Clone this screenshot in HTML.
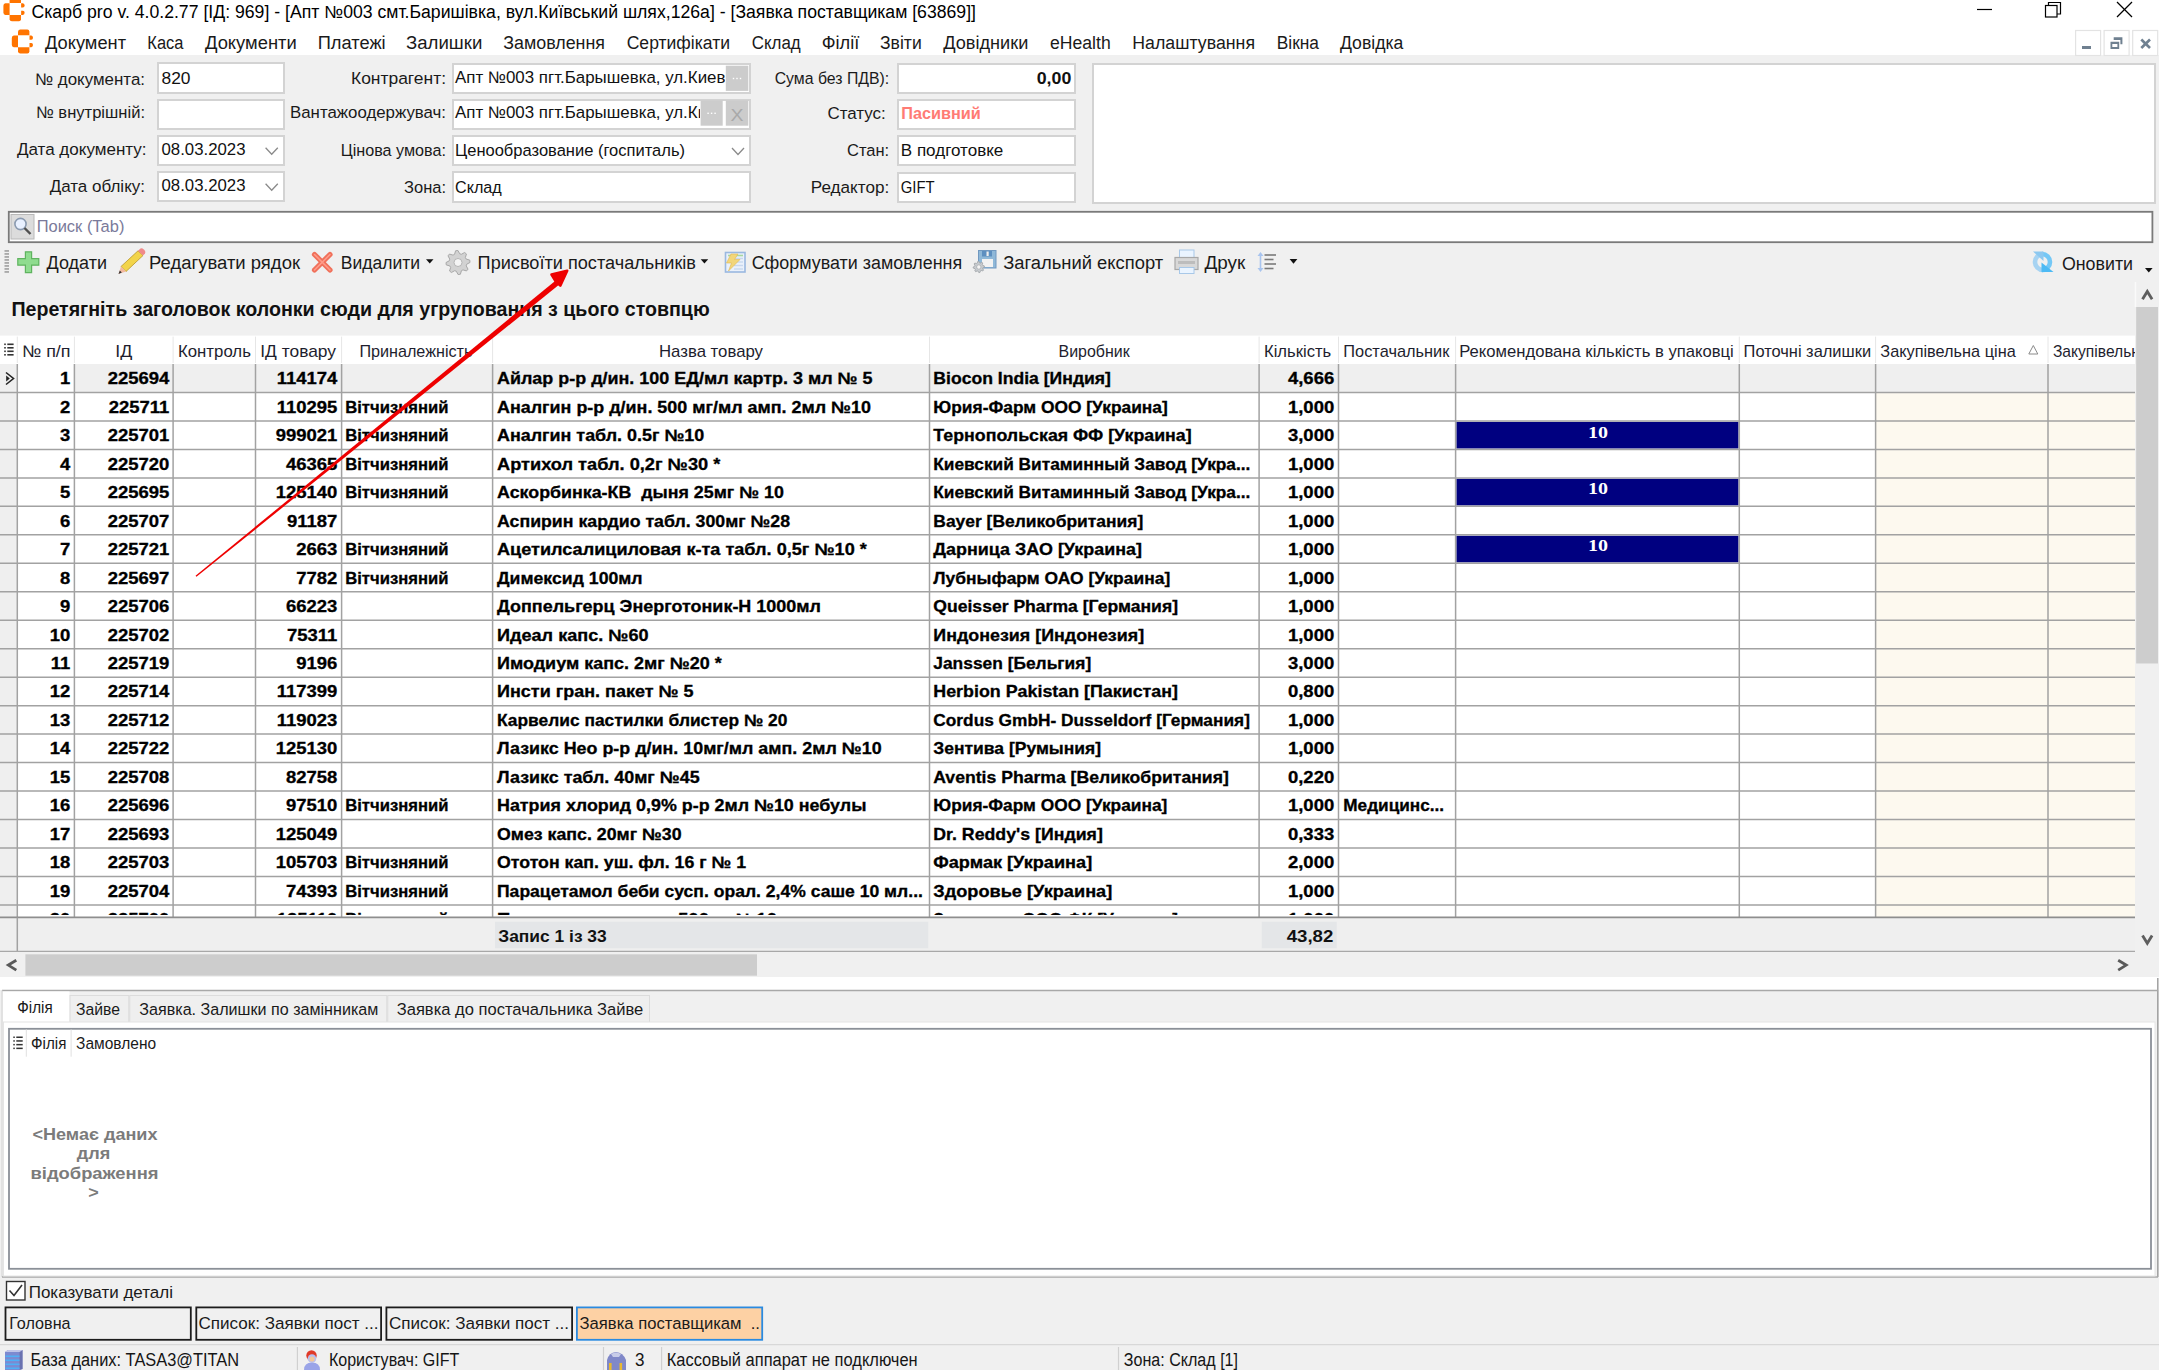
<!DOCTYPE html>
<html><head><meta charset="utf-8"><title>Скарб pro</title>
<style>html,body{margin:0;padding:0;background:#f0f0f0;width:2159px;height:1370px;overflow:hidden}svg{display:block}</style>
</head><body>
<svg width="2159" height="1370" viewBox="0 0 2159 1370">
<rect x="0.00" y="0.00" width="2159.00" height="1370.00" fill="#f0f0f0"/>
<rect x="0.00" y="0.00" width="2159.00" height="55.00" fill="#ffffff"/>
<path d="M18.0,35.3 L18.0,31.4 Q18.4,29.4 20.3,29.4 L27.4,29.4 Q29.2,29.4 29.400000000000002,31.4 L29.400000000000002,35.3 Z" fill="#ff7400"/>
<path d="M18.0,35.5 L13.8,35.5 Q11.8,35.9 11.8,38.0 L11.8,44.8 Q11.8,47.0 13.8,47.2 L18.0,47.2 Z" fill="#ff7400"/>
<path d="M18.0,47.3 L29.400000000000002,47.3 L29.400000000000002,51.599999999999994 Q29.2,53.599999999999994 27.4,53.599999999999994 L20.3,53.599999999999994 Q18.200000000000003,53.599999999999994 18.0,51.599999999999994 Z" fill="#ff7400"/>
<path d="M29.5,35.5 L31.3,35.5 Q33.0,35.9 33.0,37.7 Q33.0,39.599999999999994 31.3,39.7 L29.5,39.7 Z" fill="#ff7400"/>
<path d="M29.5,43.0 L31.3,43.0 Q33.0,43.2 33.0,45.0 Q33.0,47.0 31.3,47.2 L29.5,47.2 Z" fill="#ff7400"/>
<path d="M9.6,3.0000000000000004 L9.6,-0.8999999999999999 Q10.0,-2.9 11.9,-2.9 L19.0,-2.9 Q20.799999999999997,-2.9 21.0,-0.8999999999999999 L21.0,3.0000000000000004 Z" fill="#ff7400"/>
<path d="M9.6,3.1999999999999997 L5.4,3.1999999999999997 Q3.4,3.6 3.4,5.699999999999999 L3.4,12.5 Q3.4,14.700000000000001 5.4,14.9 L9.6,14.9 Z" fill="#ff7400"/>
<path d="M9.6,14.999999999999998 L21.0,14.999999999999998 L21.0,19.3 Q20.799999999999997,21.3 19.0,21.3 L11.9,21.3 Q9.8,21.3 9.6,19.3 Z" fill="#ff7400"/>
<path d="M21.099999999999998,3.1999999999999997 L22.9,3.1999999999999997 Q24.599999999999998,3.6 24.599999999999998,5.4 Q24.599999999999998,7.299999999999999 22.9,7.4 L21.099999999999998,7.4 Z" fill="#ff7400"/>
<path d="M21.099999999999998,10.7 L22.9,10.7 Q24.599999999999998,10.9 24.599999999999998,12.7 Q24.599999999999998,14.700000000000001 22.9,14.9 L21.099999999999998,14.9 Z" fill="#ff7400"/>
<text x="31.50" y="18.30" font-family="Liberation Sans" font-size="17.6" fill="#000" text-anchor="start" xml:space="preserve" textLength="944.50" lengthAdjust="spacingAndGlyphs">Скарб pro v. 4.0.2.77 [ІД: 969] - [Апт №003 смт.Баришівка, вул.Київський шлях,126а] - [Заявка поставщикам [63869]]</text>
<line x1="1977.00" y1="9.50" x2="1992.00" y2="9.50" stroke="#000" stroke-width="1.2"/>
<rect x="2045.50" y="5.50" width="11.50" height="11.50" fill="none" stroke="#000" stroke-width="1.2"/>
<path d="M2048.5,5.5 L2048.5,2.5 L2060.5,2.5 L2060.5,14 L2057,14" fill="none" stroke="#000" stroke-width="1.2"/>
<line x1="2117.00" y1="2.00" x2="2132.00" y2="17.00" stroke="#000" stroke-width="1.3"/>
<line x1="2132.00" y1="2.00" x2="2117.00" y2="17.00" stroke="#000" stroke-width="1.3"/>
<text x="45.00" y="49.30" font-family="Liberation Sans" font-size="17.6" fill="#1a1a1a" text-anchor="start" xml:space="preserve" textLength="81.00" lengthAdjust="spacingAndGlyphs">Документ</text>
<text x="147.30" y="49.30" font-family="Liberation Sans" font-size="17.6" fill="#1a1a1a" text-anchor="start" xml:space="preserve" textLength="36.20" lengthAdjust="spacingAndGlyphs">Каса</text>
<text x="205.00" y="49.30" font-family="Liberation Sans" font-size="17.6" fill="#1a1a1a" text-anchor="start" xml:space="preserve" textLength="91.70" lengthAdjust="spacingAndGlyphs">Документи</text>
<text x="317.70" y="49.30" font-family="Liberation Sans" font-size="17.6" fill="#1a1a1a" text-anchor="start" xml:space="preserve" textLength="68.00" lengthAdjust="spacingAndGlyphs">Платежі</text>
<text x="406.00" y="49.30" font-family="Liberation Sans" font-size="17.6" fill="#1a1a1a" text-anchor="start" xml:space="preserve" textLength="76.30" lengthAdjust="spacingAndGlyphs">Залишки</text>
<text x="503.30" y="49.30" font-family="Liberation Sans" font-size="17.6" fill="#1a1a1a" text-anchor="start" xml:space="preserve" textLength="101.70" lengthAdjust="spacingAndGlyphs">Замовлення</text>
<text x="626.70" y="49.30" font-family="Liberation Sans" font-size="17.6" fill="#1a1a1a" text-anchor="start" xml:space="preserve" textLength="103.30" lengthAdjust="spacingAndGlyphs">Сертифікати</text>
<text x="751.70" y="49.30" font-family="Liberation Sans" font-size="17.6" fill="#1a1a1a" text-anchor="start" xml:space="preserve" textLength="49.00" lengthAdjust="spacingAndGlyphs">Склад</text>
<text x="821.70" y="49.30" font-family="Liberation Sans" font-size="17.6" fill="#1a1a1a" text-anchor="start" xml:space="preserve" textLength="37.60" lengthAdjust="spacingAndGlyphs">Філії</text>
<text x="880.00" y="49.30" font-family="Liberation Sans" font-size="17.6" fill="#1a1a1a" text-anchor="start" xml:space="preserve" textLength="41.70" lengthAdjust="spacingAndGlyphs">Звіти</text>
<text x="943.30" y="49.30" font-family="Liberation Sans" font-size="17.6" fill="#1a1a1a" text-anchor="start" xml:space="preserve" textLength="85.00" lengthAdjust="spacingAndGlyphs">Довідники</text>
<text x="1050.00" y="49.30" font-family="Liberation Sans" font-size="17.6" fill="#1a1a1a" text-anchor="start" xml:space="preserve" textLength="60.70" lengthAdjust="spacingAndGlyphs">eHealth</text>
<text x="1132.30" y="49.30" font-family="Liberation Sans" font-size="17.6" fill="#1a1a1a" text-anchor="start" xml:space="preserve" textLength="122.70" lengthAdjust="spacingAndGlyphs">Налаштування</text>
<text x="1276.70" y="49.30" font-family="Liberation Sans" font-size="17.6" fill="#1a1a1a" text-anchor="start" xml:space="preserve" textLength="42.30" lengthAdjust="spacingAndGlyphs">Вікна</text>
<text x="1340.00" y="49.30" font-family="Liberation Sans" font-size="17.6" fill="#1a1a1a" text-anchor="start" xml:space="preserve" textLength="63.30" lengthAdjust="spacingAndGlyphs">Довідка</text>
<rect x="2075.60" y="30.50" width="25.00" height="25.00" fill="#ffffff" stroke="#e3e3e3" stroke-width="1.2"/>
<rect x="2104.10" y="30.50" width="25.00" height="25.00" fill="#ffffff" stroke="#e3e3e3" stroke-width="1.2"/>
<rect x="2132.70" y="30.50" width="25.00" height="25.00" fill="#ffffff" stroke="#e3e3e3" stroke-width="1.2"/>
<rect x="2082.00" y="46.00" width="9.00" height="3.00" fill="#6f8090"/>
<path d="M2113.7,37.2 h8.7 v7.1 h-2 v-4.3 h-6.7 Z" fill="#6f8090"/>
<path d="M2110.5,41.7 h8.7 v7.2 h-8.7 Z M2112.3,44 h5.1 v3.1 h-5.1 Z" fill="#6f8090" fill-rule="evenodd"/>
<line x1="2141.30" y1="39.50" x2="2150.00" y2="48.00" stroke="#6f8090" stroke-width="2.6"/>
<line x1="2150.00" y1="39.50" x2="2141.30" y2="48.00" stroke="#6f8090" stroke-width="2.6"/>
<rect x="158.00" y="63.00" width="126.00" height="30.00" fill="#ffffff" stroke="#d3d3d3" stroke-width="2"/>
<rect x="158.00" y="100.00" width="126.00" height="29.00" fill="#ffffff" stroke="#d3d3d3" stroke-width="2"/>
<rect x="158.00" y="136.00" width="126.00" height="29.00" fill="#ffffff" stroke="#d3d3d3" stroke-width="2"/>
<rect x="158.00" y="172.00" width="126.00" height="29.00" fill="#ffffff" stroke="#d3d3d3" stroke-width="2"/>
<rect x="453.00" y="64.00" width="297.00" height="29.00" fill="#ffffff" stroke="#d3d3d3" stroke-width="2"/>
<rect x="453.00" y="100.00" width="297.00" height="29.00" fill="#ffffff" stroke="#d3d3d3" stroke-width="2"/>
<rect x="453.00" y="136.00" width="297.00" height="29.00" fill="#ffffff" stroke="#d3d3d3" stroke-width="2"/>
<rect x="453.00" y="172.00" width="297.00" height="30.00" fill="#ffffff" stroke="#d3d3d3" stroke-width="2"/>
<rect x="898.00" y="64.00" width="177.00" height="29.00" fill="#ffffff" stroke="#d3d3d3" stroke-width="2"/>
<rect x="898.00" y="100.00" width="177.00" height="29.00" fill="#ffffff" stroke="#d3d3d3" stroke-width="2"/>
<rect x="898.00" y="136.00" width="177.00" height="29.00" fill="#ffffff" stroke="#d3d3d3" stroke-width="2"/>
<rect x="898.00" y="173.00" width="177.00" height="29.00" fill="#ffffff" stroke="#d3d3d3" stroke-width="2"/>
<rect x="1093.00" y="64.00" width="1062.00" height="139.00" fill="#ffffff" stroke="#d3d3d3" stroke-width="2"/>
<text x="35.00" y="84.90" font-family="Liberation Sans" font-size="16.9" fill="#1a1a1a" text-anchor="start" xml:space="preserve" textLength="110.00" lengthAdjust="spacingAndGlyphs">№ документа:</text>
<text x="36.00" y="117.70" font-family="Liberation Sans" font-size="16.9" fill="#1a1a1a" text-anchor="start" xml:space="preserve" textLength="109.00" lengthAdjust="spacingAndGlyphs">№ внутрішній:</text>
<text x="16.90" y="154.70" font-family="Liberation Sans" font-size="16.9" fill="#1a1a1a" text-anchor="start" xml:space="preserve" textLength="129.70" lengthAdjust="spacingAndGlyphs">Дата документу:</text>
<text x="49.70" y="192.30" font-family="Liberation Sans" font-size="16.9" fill="#1a1a1a" text-anchor="start" xml:space="preserve" textLength="95.30" lengthAdjust="spacingAndGlyphs">Дата обліку:</text>
<text x="351.00" y="83.80" font-family="Liberation Sans" font-size="16.9" fill="#1a1a1a" text-anchor="start" xml:space="preserve" textLength="95.00" lengthAdjust="spacingAndGlyphs">Контрагент:</text>
<text x="290.00" y="118.30" font-family="Liberation Sans" font-size="16.9" fill="#1a1a1a" text-anchor="start" xml:space="preserve" textLength="156.00" lengthAdjust="spacingAndGlyphs">Вантажоодержувач:</text>
<text x="340.70" y="155.80" font-family="Liberation Sans" font-size="16.9" fill="#1a1a1a" text-anchor="start" xml:space="preserve" textLength="105.30" lengthAdjust="spacingAndGlyphs">Цінова умова:</text>
<text x="404.00" y="192.80" font-family="Liberation Sans" font-size="16.9" fill="#1a1a1a" text-anchor="start" xml:space="preserve" textLength="42.00" lengthAdjust="spacingAndGlyphs">Зона:</text>
<text x="774.70" y="84.20" font-family="Liberation Sans" font-size="16.9" fill="#1a1a1a" text-anchor="start" xml:space="preserve" textLength="114.50" lengthAdjust="spacingAndGlyphs">Сума без ПДВ):</text>
<text x="827.50" y="119.20" font-family="Liberation Sans" font-size="16.9" fill="#1a1a1a" text-anchor="start" xml:space="preserve" textLength="58.30" lengthAdjust="spacingAndGlyphs">Статус:</text>
<text x="847.00" y="155.80" font-family="Liberation Sans" font-size="16.9" fill="#1a1a1a" text-anchor="start" xml:space="preserve" textLength="42.20" lengthAdjust="spacingAndGlyphs">Стан:</text>
<text x="810.80" y="192.50" font-family="Liberation Sans" font-size="16.9" fill="#1a1a1a" text-anchor="start" xml:space="preserve" textLength="78.40" lengthAdjust="spacingAndGlyphs">Редактор:</text>
<text x="161.50" y="83.60" font-family="Liberation Sans" font-size="16.9" fill="#111" text-anchor="start" xml:space="preserve" textLength="29.00" lengthAdjust="spacingAndGlyphs">820</text>
<text x="161.50" y="154.90" font-family="Liberation Sans" font-size="16.9" fill="#111" text-anchor="start" xml:space="preserve" textLength="84.00" lengthAdjust="spacingAndGlyphs">08.03.2023</text>
<text x="161.50" y="191.00" font-family="Liberation Sans" font-size="16.9" fill="#111" text-anchor="start" xml:space="preserve" textLength="84.00" lengthAdjust="spacingAndGlyphs">08.03.2023</text>
<path d="M265.6,147.8 L271.70000000000005,154.3 L277.8,147.8" fill="none" stroke="#8a8a8a" stroke-width="1.3"/>
<path d="M265.6,183.8 L271.70000000000005,190.3 L277.8,183.8" fill="none" stroke="#8a8a8a" stroke-width="1.3"/>
<path d="M732,148 L738.0,154.5 L744,148" fill="none" stroke="#8a8a8a" stroke-width="1.3"/>
<clipPath id="c1"><rect x="454" y="64" width="271" height="28"/></clipPath>
<clipPath id="c2"><rect x="454" y="100" width="246" height="28"/></clipPath>
<g clip-path="url(#c1)">
<text x="455.00" y="83.30" font-family="Liberation Sans" font-size="16.9" fill="#111" text-anchor="start" xml:space="preserve">Апт №003 пгт.Барышевка, ул.Киевский шлях</text>
</g>
<g clip-path="url(#c2)">
<text x="455.00" y="118.30" font-family="Liberation Sans" font-size="16.9" fill="#111" text-anchor="start" xml:space="preserve">Апт №003 пгт.Барышевка, ул.Киевский шлях</text>
</g>
<rect x="725.80" y="65.70" width="22.50" height="25.20" fill="#cccccc"/>
<rect x="700.60" y="100.50" width="22.10" height="25.20" fill="#cccccc"/>
<rect x="725.80" y="100.50" width="22.50" height="25.20" fill="#cccccc"/>
<rect x="732.80" y="77.80" width="1.40" height="1.40" fill="#ffffff"/>
<rect x="736.30" y="77.80" width="1.40" height="1.40" fill="#ffffff"/>
<rect x="739.80" y="77.80" width="1.40" height="1.40" fill="#ffffff"/>
<rect x="707.40" y="112.60" width="1.40" height="1.40" fill="#ffffff"/>
<rect x="710.90" y="112.60" width="1.40" height="1.40" fill="#ffffff"/>
<rect x="714.40" y="112.60" width="1.40" height="1.40" fill="#ffffff"/>
<text x="730.50" y="121.00" font-family="Liberation Sans" font-size="17" fill="#a9a9a9" text-anchor="start" xml:space="preserve" textLength="13.00" lengthAdjust="spacingAndGlyphs">X</text>
<text x="455.00" y="155.80" font-family="Liberation Sans" font-size="16.9" fill="#111" text-anchor="start" xml:space="preserve" textLength="230.00" lengthAdjust="spacingAndGlyphs">Ценообразование (госпиталь)</text>
<text x="455.00" y="192.80" font-family="Liberation Sans" font-size="16.9" fill="#111" text-anchor="start" xml:space="preserve" textLength="46.70" lengthAdjust="spacingAndGlyphs">Склад</text>
<text x="1036.70" y="84.20" font-family="Liberation Sans" font-size="16.9" font-weight="bold" fill="#111" text-anchor="start" xml:space="preserve" textLength="34.60" lengthAdjust="spacingAndGlyphs">0,00</text>
<text x="901.30" y="119.20" font-family="Liberation Sans" font-size="16.9" font-weight="bold" fill="#ff7b74" text-anchor="start" xml:space="preserve" textLength="79.50" lengthAdjust="spacingAndGlyphs">Пасивний</text>
<text x="900.80" y="155.80" font-family="Liberation Sans" font-size="16.9" fill="#111" text-anchor="start" xml:space="preserve" textLength="102.50" lengthAdjust="spacingAndGlyphs">В подготовке</text>
<text x="900.80" y="192.50" font-family="Liberation Sans" font-size="16.9" fill="#111" text-anchor="start" xml:space="preserve" textLength="33.90" lengthAdjust="spacingAndGlyphs">GIFT</text>
<rect x="8.80" y="211.80" width="2143.60" height="30.40" fill="#ffffff" stroke="#7a7a7a" stroke-width="1.8"/>
<rect x="11.00" y="214.50" width="23.00" height="24.50" fill="#dcdcdc" stroke="#b8b8b8" stroke-width="1"/>
<circle cx="20.5" cy="224" r="5.6" fill="#e8f0ff" stroke="#8a9ab0" stroke-width="1.6"/>
<line x1="24.50" y1="228.00" x2="30.50" y2="234.00" stroke="#505050" stroke-width="2.4"/>
<text x="36.70" y="232.20" font-family="Liberation Sans" font-size="16.9" fill="#7a7a9a" text-anchor="start" xml:space="preserve" textLength="87.70" lengthAdjust="spacingAndGlyphs">Поиск (Tab)</text>
<rect x="4.50" y="250.30" width="4.50" height="1.30" fill="#8c8c8c"/>
<rect x="4.50" y="253.30" width="4.50" height="1.30" fill="#8c8c8c"/>
<rect x="4.50" y="256.30" width="4.50" height="1.30" fill="#8c8c8c"/>
<rect x="4.50" y="259.30" width="4.50" height="1.30" fill="#8c8c8c"/>
<rect x="4.50" y="262.30" width="4.50" height="1.30" fill="#8c8c8c"/>
<rect x="4.50" y="265.30" width="4.50" height="1.30" fill="#8c8c8c"/>
<rect x="4.50" y="268.30" width="4.50" height="1.30" fill="#8c8c8c"/>
<rect x="4.50" y="271.30" width="4.50" height="1.30" fill="#8c8c8c"/>
<path d="M25.4,251.8 h6.2 v6.8 h7.2 v6.6 h-7.2 v7.5 h-6.2 v-7.5 h-7.6 v-6.6 h7.6 Z" fill="#8fdc8f" stroke="#5fb35f" stroke-width="1.2"/>
<text x="46.60" y="269.30" font-family="Liberation Sans" font-size="17.6" fill="#1a1a1a" text-anchor="start" xml:space="preserve" textLength="60.40" lengthAdjust="spacingAndGlyphs">Додати</text>
<path d="M121,266.5 L138,250.8 L143,255.5 L126,271.5 Z" fill="#f2d44a" stroke="#b8962a" stroke-width="0.8"/>
<path d="M138,250.8 L140.5,248.6 Q142,247.8 143.5,249.2 L145,250.8 Q145.8,252.2 145,253.5 L143,255.5 Z" fill="#f08a8a"/>
<path d="M121,266.5 L126,271.5 L118.5,274 Z" fill="#f2b9a0"/>
<path d="M119.8,270.5 L121.8,272.6 L118.5,274 Z" fill="#333"/>
<text x="149.00" y="269.30" font-family="Liberation Sans" font-size="17.6" fill="#1a1a1a" text-anchor="start" xml:space="preserve" textLength="151.00" lengthAdjust="spacingAndGlyphs">Редагувати рядок</text>
<line x1="314.50" y1="254.50" x2="330.00" y2="270.00" stroke="#f0705a" stroke-width="5.2" stroke-linecap="round"/>
<line x1="330.00" y1="254.50" x2="314.50" y2="270.00" stroke="#f0705a" stroke-width="5.2" stroke-linecap="round"/>
<line x1="314.50" y1="254.50" x2="330.00" y2="270.00" stroke="#ff9c8a" stroke-width="1.6" stroke-linecap="round"/>
<line x1="330.00" y1="254.50" x2="314.50" y2="270.00" stroke="#ff9c8a" stroke-width="1.6" stroke-linecap="round"/>
<text x="340.70" y="269.30" font-family="Liberation Sans" font-size="17.6" fill="#1a1a1a" text-anchor="start" xml:space="preserve" textLength="79.30" lengthAdjust="spacingAndGlyphs">Видалити</text>
<path d="M426,259.3 h7.5 l-3.75,4.3 Z" fill="#111"/>
<path d="M469.76,260.12 L470.00,262.46 L466.72,264.20 L466.22,265.87 L468.00,269.13 L466.52,270.95 L462.96,269.87 L461.43,270.69 L460.38,274.26 L458.04,274.50 L456.30,271.22 L454.63,270.72 L451.37,272.50 L449.55,271.02 L450.63,267.46 L449.81,265.93 L446.24,264.88 L446.00,262.54 L449.28,260.80 L449.78,259.13 L448.00,255.87 L449.48,254.05 L453.04,255.13 L454.57,254.31 L455.62,250.74 L457.96,250.50 L459.70,253.78 L461.37,254.28 L464.63,252.50 L466.45,253.98 L465.37,257.54 L466.19,259.07 Z" fill="#d2d2d2" stroke="#a8a8a8" stroke-width="1"/>
<circle cx="458" cy="262.5" r="4" fill="#f4f4f4" stroke="#a8a8a8" stroke-width="0.8"/>
<text x="477.60" y="269.30" font-family="Liberation Sans" font-size="17.6" fill="#1a1a1a" text-anchor="start" xml:space="preserve" textLength="218.40" lengthAdjust="spacingAndGlyphs">Присвоїти постачальників</text>
<path d="M700.7,259.3 h7.5 l-3.75,4.3 Z" fill="#111"/>
<rect x="725.50" y="252.50" width="19.50" height="19.50" fill="#eaf1fb" stroke="#9ab8e0" stroke-width="1.6"/>
<line x1="734.00" y1="258.50" x2="743.00" y2="258.50" stroke="#c8d8ee" stroke-width="1.4"/>
<line x1="734.00" y1="262.00" x2="743.00" y2="262.00" stroke="#c8d8ee" stroke-width="1.4"/>
<line x1="734.00" y1="265.50" x2="743.00" y2="265.50" stroke="#c8d8ee" stroke-width="1.4"/>
<line x1="734.00" y1="269.00" x2="743.00" y2="269.00" stroke="#c8d8ee" stroke-width="1.4"/>
<line x1="728.00" y1="255.50" x2="743.00" y2="255.50" stroke="#a8d8a0" stroke-width="1.6"/>
<path d="M731,254 L738,254 L734.5,259.5 L740,259.5 L728.5,271 L731.5,263 L726.5,263 Z" fill="#f2d67a" stroke="#e0b850" stroke-width="0.6"/>
<text x="751.70" y="269.30" font-family="Liberation Sans" font-size="17.6" fill="#1a1a1a" text-anchor="start" xml:space="preserve" textLength="210.50" lengthAdjust="spacingAndGlyphs">Сформувати замовлення</text>
<rect x="978.50" y="250.50" width="17.50" height="17.50" fill="#8fb8d8" stroke="#7098c0" stroke-width="1"/>
<rect x="982.00" y="251.00" width="10.00" height="5.50" fill="#5d8fc0"/>
<rect x="986.50" y="251.50" width="2.20" height="4.50" fill="#eeeeee"/>
<rect x="982.00" y="259.00" width="11.00" height="8.00" fill="#f2f2f2"/>
<path d="M984.29,265.89 L984.40,266.98 L982.87,267.79 L982.63,268.57 L983.47,270.09 L982.77,270.95 L981.11,270.44 L980.40,270.82 L979.91,272.49 L978.82,272.60 L978.01,271.07 L977.23,270.83 L975.71,271.67 L974.85,270.97 L975.36,269.31 L974.98,268.60 L973.31,268.11 L973.20,267.02 L974.73,266.21 L974.97,265.43 L974.13,263.91 L974.83,263.05 L976.49,263.56 L977.20,263.18 L977.69,261.51 L978.78,261.40 L979.59,262.93 L980.37,263.17 L981.89,262.33 L982.75,263.03 L982.24,264.69 L982.62,265.40 Z" fill="#c8ccd0" stroke="#a8acb0" stroke-width="1"/>
<circle cx="978.8" cy="267" r="2.2" fill="#f4f4f4" stroke="#a8acb0" stroke-width="0.8"/>
<text x="1003.20" y="269.30" font-family="Liberation Sans" font-size="17.6" fill="#1a1a1a" text-anchor="start" xml:space="preserve" textLength="160.00" lengthAdjust="spacingAndGlyphs">Загальний експорт</text>
<rect x="1179.50" y="250.00" width="14.50" height="9.00" fill="#eaf4ff" stroke="#a8c8e8" stroke-width="1"/>
<rect x="1175.00" y="257.50" width="23.00" height="12.00" fill="#d8d8d8" stroke="#a8a8a8" stroke-width="1.2"/>
<rect x="1178.00" y="261.00" width="17.00" height="3.00" fill="#bdbdbd"/>
<rect x="1179.50" y="267.50" width="14.50" height="6.00" fill="#eaf4ff" stroke="#a8c8e8" stroke-width="1"/>
<text x="1204.40" y="269.30" font-family="Liberation Sans" font-size="17.6" fill="#1a1a1a" text-anchor="start" xml:space="preserve" textLength="40.80" lengthAdjust="spacingAndGlyphs">Друк</text>
<line x1="1260.50" y1="254.00" x2="1260.50" y2="270.00" stroke="#a8c4ee" stroke-width="1.6"/>
<path d="M1257.5,256 L1260.5,252 L1263.5,256 Z" fill="#a8c4ee"/>
<path d="M1257.5,268 L1260.5,272 L1263.5,268 Z" fill="#a8c4ee"/>
<line x1="1264.50" y1="255.00" x2="1276.00" y2="255.00" stroke="#7a7a7a" stroke-width="1.6"/>
<line x1="1264.50" y1="259.50" x2="1273.50" y2="259.50" stroke="#7a7a7a" stroke-width="1.6"/>
<line x1="1264.50" y1="264.00" x2="1276.00" y2="264.00" stroke="#7a7a7a" stroke-width="1.6"/>
<line x1="1264.50" y1="268.50" x2="1273.50" y2="268.50" stroke="#7a7a7a" stroke-width="1.6"/>
<path d="M1289.6,259 h7.8 l-3.9,4.8 Z" fill="#111"/>
<path d="M2043,254 A8,8 0 0 0 2043,270" fill="none" stroke="#a6d3f2" stroke-width="4.6"/>
<path d="M2042,270 A8,8 0 0 0 2042,254" fill="none" stroke="#74c8f6" stroke-width="4.6"/>
<path d="M2033,251.5 L2043.5,251.5 L2043.5,261 Z" fill="#8cc8f0"/>
<path d="M2053.5,272 L2041.5,272 L2041.5,262.5 Z" fill="#4dbaf4"/>
<text x="2061.90" y="269.50" font-family="Liberation Sans" font-size="17.6" fill="#1a1a1a" text-anchor="start" xml:space="preserve" textLength="71.10" lengthAdjust="spacingAndGlyphs">Оновити</text>
<path d="M2145,268 h7.6 l-3.8,4.6 Z" fill="#111"/>
<text x="11.40" y="316.00" font-family="Liberation Sans" font-size="19.5" font-weight="bold" fill="#111" text-anchor="start" xml:space="preserve" textLength="698.30" lengthAdjust="spacingAndGlyphs">Перетягніть заголовок колонки сюди для угруповання з цього стовпцю</text>
<rect x="0.00" y="335.60" width="2135.00" height="28.40" fill="#ffffff"/>
<rect x="0.00" y="364.00" width="2135.00" height="553.50" fill="#ffffff"/>
<rect x="0.00" y="364.00" width="17.30" height="553.50" fill="#efefef"/>
<rect x="1875.60" y="364.00" width="259.40" height="553.50" fill="#fdf9ef"/>
<rect x="74.40" y="364.00" width="2060.60" height="28.47" fill="#efefef"/>
<rect x="1456.40" y="421.84" width="282.10" height="26.67" fill="#000080"/>
<rect x="1456.40" y="478.78" width="282.10" height="26.67" fill="#000080"/>
<rect x="1456.40" y="535.72" width="282.10" height="26.67" fill="#000080"/>
<line x1="17.30" y1="336.60" x2="17.30" y2="363.00" stroke="#e6e6e6" stroke-width="1"/>
<line x1="74.40" y1="336.60" x2="74.40" y2="363.00" stroke="#e6e6e6" stroke-width="1"/>
<line x1="173.10" y1="336.60" x2="173.10" y2="363.00" stroke="#e6e6e6" stroke-width="1"/>
<line x1="255.50" y1="336.60" x2="255.50" y2="363.00" stroke="#e6e6e6" stroke-width="1"/>
<line x1="341.60" y1="336.60" x2="341.60" y2="363.00" stroke="#e6e6e6" stroke-width="1"/>
<line x1="492.60" y1="336.60" x2="492.60" y2="363.00" stroke="#e6e6e6" stroke-width="1"/>
<line x1="929.50" y1="336.60" x2="929.50" y2="363.00" stroke="#e6e6e6" stroke-width="1"/>
<line x1="1259.10" y1="336.60" x2="1259.10" y2="363.00" stroke="#e6e6e6" stroke-width="1"/>
<line x1="1338.50" y1="336.60" x2="1338.50" y2="363.00" stroke="#e6e6e6" stroke-width="1"/>
<line x1="1455.60" y1="336.60" x2="1455.60" y2="363.00" stroke="#e6e6e6" stroke-width="1"/>
<line x1="1739.30" y1="336.60" x2="1739.30" y2="363.00" stroke="#e6e6e6" stroke-width="1"/>
<line x1="1875.60" y1="336.60" x2="1875.60" y2="363.00" stroke="#e6e6e6" stroke-width="1"/>
<line x1="2048.00" y1="336.60" x2="2048.00" y2="363.00" stroke="#e6e6e6" stroke-width="1"/>
<line x1="0.00" y1="392.47" x2="2135.00" y2="392.47" stroke="#a2a2a2" stroke-width="1.5"/>
<line x1="0.00" y1="420.94" x2="2135.00" y2="420.94" stroke="#a2a2a2" stroke-width="1.5"/>
<line x1="0.00" y1="449.41" x2="2135.00" y2="449.41" stroke="#a2a2a2" stroke-width="1.5"/>
<line x1="0.00" y1="477.88" x2="2135.00" y2="477.88" stroke="#a2a2a2" stroke-width="1.5"/>
<line x1="0.00" y1="506.35" x2="2135.00" y2="506.35" stroke="#a2a2a2" stroke-width="1.5"/>
<line x1="0.00" y1="534.82" x2="2135.00" y2="534.82" stroke="#a2a2a2" stroke-width="1.5"/>
<line x1="0.00" y1="563.29" x2="2135.00" y2="563.29" stroke="#a2a2a2" stroke-width="1.5"/>
<line x1="0.00" y1="591.76" x2="2135.00" y2="591.76" stroke="#a2a2a2" stroke-width="1.5"/>
<line x1="0.00" y1="620.23" x2="2135.00" y2="620.23" stroke="#a2a2a2" stroke-width="1.5"/>
<line x1="0.00" y1="648.70" x2="2135.00" y2="648.70" stroke="#a2a2a2" stroke-width="1.5"/>
<line x1="0.00" y1="677.17" x2="2135.00" y2="677.17" stroke="#a2a2a2" stroke-width="1.5"/>
<line x1="0.00" y1="705.64" x2="2135.00" y2="705.64" stroke="#a2a2a2" stroke-width="1.5"/>
<line x1="0.00" y1="734.11" x2="2135.00" y2="734.11" stroke="#a2a2a2" stroke-width="1.5"/>
<line x1="0.00" y1="762.58" x2="2135.00" y2="762.58" stroke="#a2a2a2" stroke-width="1.5"/>
<line x1="0.00" y1="791.05" x2="2135.00" y2="791.05" stroke="#a2a2a2" stroke-width="1.5"/>
<line x1="0.00" y1="819.52" x2="2135.00" y2="819.52" stroke="#a2a2a2" stroke-width="1.5"/>
<line x1="0.00" y1="847.99" x2="2135.00" y2="847.99" stroke="#a2a2a2" stroke-width="1.5"/>
<line x1="0.00" y1="876.46" x2="2135.00" y2="876.46" stroke="#a2a2a2" stroke-width="1.5"/>
<line x1="0.00" y1="904.93" x2="2135.00" y2="904.93" stroke="#a2a2a2" stroke-width="1.5"/>
<line x1="17.30" y1="364.00" x2="17.30" y2="917.50" stroke="#a2a2a2" stroke-width="1.5"/>
<line x1="74.40" y1="364.00" x2="74.40" y2="917.50" stroke="#a2a2a2" stroke-width="1.5"/>
<line x1="173.10" y1="364.00" x2="173.10" y2="917.50" stroke="#a2a2a2" stroke-width="1.5"/>
<line x1="255.50" y1="364.00" x2="255.50" y2="917.50" stroke="#a2a2a2" stroke-width="1.5"/>
<line x1="341.60" y1="364.00" x2="341.60" y2="917.50" stroke="#a2a2a2" stroke-width="1.5"/>
<line x1="492.60" y1="364.00" x2="492.60" y2="917.50" stroke="#a2a2a2" stroke-width="1.5"/>
<line x1="929.50" y1="364.00" x2="929.50" y2="917.50" stroke="#a2a2a2" stroke-width="1.5"/>
<line x1="1259.10" y1="364.00" x2="1259.10" y2="917.50" stroke="#a2a2a2" stroke-width="1.5"/>
<line x1="1338.50" y1="364.00" x2="1338.50" y2="917.50" stroke="#a2a2a2" stroke-width="1.5"/>
<line x1="1455.60" y1="364.00" x2="1455.60" y2="917.50" stroke="#a2a2a2" stroke-width="1.5"/>
<line x1="1739.30" y1="364.00" x2="1739.30" y2="917.50" stroke="#a2a2a2" stroke-width="1.5"/>
<line x1="1875.60" y1="364.00" x2="1875.60" y2="917.50" stroke="#a2a2a2" stroke-width="1.5"/>
<line x1="2048.00" y1="364.00" x2="2048.00" y2="917.50" stroke="#a2a2a2" stroke-width="1.5"/>
<clipPath id="gclip"><rect x="0" y="364.0" width="2135" height="551.1"/></clipPath>
<g clip-path="url(#gclip)">
<text x="59.93" y="384.30" font-family="Liberation Sans" font-size="16.2" font-weight="bold" fill="#000" text-anchor="start" xml:space="preserve" textLength="10.27" lengthAdjust="spacingAndGlyphs" stroke="#000" stroke-width="0.3">1</text>
<text x="107.67" y="384.30" font-family="Liberation Sans" font-size="16.2" font-weight="bold" fill="#000" text-anchor="start" xml:space="preserve" textLength="61.63" lengthAdjust="spacingAndGlyphs" stroke="#000" stroke-width="0.3">225694</text>
<text x="276.69" y="384.30" font-family="Liberation Sans" font-size="16.2" font-weight="bold" fill="#000" text-anchor="start" xml:space="preserve" textLength="60.61" lengthAdjust="spacingAndGlyphs" stroke="#000" stroke-width="0.3">114174</text>
<text x="497.00" y="384.30" font-family="Liberation Sans" font-size="16.2" font-weight="bold" fill="#000" text-anchor="start" xml:space="preserve" textLength="375.50" lengthAdjust="spacingAndGlyphs" stroke="#000" stroke-width="0.3">Айлар р-р д/ин. 100 ЕД/мл картр. 3 мл № 5</text>
<text x="933.30" y="384.30" font-family="Liberation Sans" font-size="16.2" font-weight="bold" fill="#000" text-anchor="start" xml:space="preserve" textLength="177.70" lengthAdjust="spacingAndGlyphs" stroke="#000" stroke-width="0.3">Biocon India [Индия]</text>
<text x="1287.98" y="384.30" font-family="Liberation Sans" font-size="16.2" font-weight="bold" fill="#000" text-anchor="start" xml:space="preserve" textLength="46.22" lengthAdjust="spacingAndGlyphs" stroke="#000" stroke-width="0.3">4,666</text>
<text x="59.93" y="412.77" font-family="Liberation Sans" font-size="16.2" font-weight="bold" fill="#000" text-anchor="start" xml:space="preserve" textLength="10.27" lengthAdjust="spacingAndGlyphs" stroke="#000" stroke-width="0.3">2</text>
<text x="108.69" y="412.77" font-family="Liberation Sans" font-size="16.2" font-weight="bold" fill="#000" text-anchor="start" xml:space="preserve" textLength="60.61" lengthAdjust="spacingAndGlyphs" stroke="#000" stroke-width="0.3">225711</text>
<text x="276.69" y="412.77" font-family="Liberation Sans" font-size="16.2" font-weight="bold" fill="#000" text-anchor="start" xml:space="preserve" textLength="60.61" lengthAdjust="spacingAndGlyphs" stroke="#000" stroke-width="0.3">110295</text>
<text x="345.20" y="412.77" font-family="Liberation Sans" font-size="16.2" font-weight="bold" fill="#000" text-anchor="start" xml:space="preserve" textLength="103.30" lengthAdjust="spacingAndGlyphs" stroke="#000" stroke-width="0.3">Вітчизняний</text>
<text x="497.00" y="412.77" font-family="Liberation Sans" font-size="16.2" font-weight="bold" fill="#000" text-anchor="start" xml:space="preserve" textLength="374.00" lengthAdjust="spacingAndGlyphs" stroke="#000" stroke-width="0.3">Аналгин р-р д/ин. 500 мг/мл амп. 2мл №10</text>
<text x="933.30" y="412.77" font-family="Liberation Sans" font-size="16.2" font-weight="bold" fill="#000" text-anchor="start" xml:space="preserve" textLength="234.50" lengthAdjust="spacingAndGlyphs" stroke="#000" stroke-width="0.3">Юрия-Фарм ООО [Украина]</text>
<text x="1287.98" y="412.77" font-family="Liberation Sans" font-size="16.2" font-weight="bold" fill="#000" text-anchor="start" xml:space="preserve" textLength="46.22" lengthAdjust="spacingAndGlyphs" stroke="#000" stroke-width="0.3">1,000</text>
<text x="59.93" y="441.24" font-family="Liberation Sans" font-size="16.2" font-weight="bold" fill="#000" text-anchor="start" xml:space="preserve" textLength="10.27" lengthAdjust="spacingAndGlyphs" stroke="#000" stroke-width="0.3">3</text>
<text x="107.67" y="441.24" font-family="Liberation Sans" font-size="16.2" font-weight="bold" fill="#000" text-anchor="start" xml:space="preserve" textLength="61.63" lengthAdjust="spacingAndGlyphs" stroke="#000" stroke-width="0.3">225701</text>
<text x="275.67" y="441.24" font-family="Liberation Sans" font-size="16.2" font-weight="bold" fill="#000" text-anchor="start" xml:space="preserve" textLength="61.63" lengthAdjust="spacingAndGlyphs" stroke="#000" stroke-width="0.3">999021</text>
<text x="345.20" y="441.24" font-family="Liberation Sans" font-size="16.2" font-weight="bold" fill="#000" text-anchor="start" xml:space="preserve" textLength="103.30" lengthAdjust="spacingAndGlyphs" stroke="#000" stroke-width="0.3">Вітчизняний</text>
<text x="497.00" y="441.24" font-family="Liberation Sans" font-size="16.2" font-weight="bold" fill="#000" text-anchor="start" xml:space="preserve" textLength="207.30" lengthAdjust="spacingAndGlyphs" stroke="#000" stroke-width="0.3">Аналгин табл. 0.5г №10</text>
<text x="933.30" y="441.24" font-family="Liberation Sans" font-size="16.2" font-weight="bold" fill="#000" text-anchor="start" xml:space="preserve" textLength="258.40" lengthAdjust="spacingAndGlyphs" stroke="#000" stroke-width="0.3">Тернопольская ФФ [Украина]</text>
<text x="1287.98" y="441.24" font-family="Liberation Sans" font-size="16.2" font-weight="bold" fill="#000" text-anchor="start" xml:space="preserve" textLength="46.22" lengthAdjust="spacingAndGlyphs" stroke="#000" stroke-width="0.3">3,000</text>
<text x="59.93" y="469.71" font-family="Liberation Sans" font-size="16.2" font-weight="bold" fill="#000" text-anchor="start" xml:space="preserve" textLength="10.27" lengthAdjust="spacingAndGlyphs" stroke="#000" stroke-width="0.3">4</text>
<text x="107.67" y="469.71" font-family="Liberation Sans" font-size="16.2" font-weight="bold" fill="#000" text-anchor="start" xml:space="preserve" textLength="61.63" lengthAdjust="spacingAndGlyphs" stroke="#000" stroke-width="0.3">225720</text>
<text x="285.94" y="469.71" font-family="Liberation Sans" font-size="16.2" font-weight="bold" fill="#000" text-anchor="start" xml:space="preserve" textLength="51.36" lengthAdjust="spacingAndGlyphs" stroke="#000" stroke-width="0.3">46365</text>
<text x="345.20" y="469.71" font-family="Liberation Sans" font-size="16.2" font-weight="bold" fill="#000" text-anchor="start" xml:space="preserve" textLength="103.30" lengthAdjust="spacingAndGlyphs" stroke="#000" stroke-width="0.3">Вітчизняний</text>
<text x="497.00" y="469.71" font-family="Liberation Sans" font-size="16.2" font-weight="bold" fill="#000" text-anchor="start" xml:space="preserve" textLength="223.30" lengthAdjust="spacingAndGlyphs" stroke="#000" stroke-width="0.3">Артихол табл. 0,2г №30 *</text>
<text x="933.30" y="469.71" font-family="Liberation Sans" font-size="16.2" font-weight="bold" fill="#000" text-anchor="start" xml:space="preserve" textLength="317.10" lengthAdjust="spacingAndGlyphs" stroke="#000" stroke-width="0.3">Киевский Витаминный Завод [Укра...</text>
<text x="1287.98" y="469.71" font-family="Liberation Sans" font-size="16.2" font-weight="bold" fill="#000" text-anchor="start" xml:space="preserve" textLength="46.22" lengthAdjust="spacingAndGlyphs" stroke="#000" stroke-width="0.3">1,000</text>
<text x="59.93" y="498.18" font-family="Liberation Sans" font-size="16.2" font-weight="bold" fill="#000" text-anchor="start" xml:space="preserve" textLength="10.27" lengthAdjust="spacingAndGlyphs" stroke="#000" stroke-width="0.3">5</text>
<text x="107.67" y="498.18" font-family="Liberation Sans" font-size="16.2" font-weight="bold" fill="#000" text-anchor="start" xml:space="preserve" textLength="61.63" lengthAdjust="spacingAndGlyphs" stroke="#000" stroke-width="0.3">225695</text>
<text x="275.67" y="498.18" font-family="Liberation Sans" font-size="16.2" font-weight="bold" fill="#000" text-anchor="start" xml:space="preserve" textLength="61.63" lengthAdjust="spacingAndGlyphs" stroke="#000" stroke-width="0.3">125140</text>
<text x="345.20" y="498.18" font-family="Liberation Sans" font-size="16.2" font-weight="bold" fill="#000" text-anchor="start" xml:space="preserve" textLength="103.30" lengthAdjust="spacingAndGlyphs" stroke="#000" stroke-width="0.3">Вітчизняний</text>
<text x="497.00" y="498.18" font-family="Liberation Sans" font-size="16.2" font-weight="bold" fill="#000" text-anchor="start" xml:space="preserve" textLength="286.90" lengthAdjust="spacingAndGlyphs" stroke="#000" stroke-width="0.3">Аскорбинка-КВ  дыня 25мг № 10</text>
<text x="933.30" y="498.18" font-family="Liberation Sans" font-size="16.2" font-weight="bold" fill="#000" text-anchor="start" xml:space="preserve" textLength="317.10" lengthAdjust="spacingAndGlyphs" stroke="#000" stroke-width="0.3">Киевский Витаминный Завод [Укра...</text>
<text x="1287.98" y="498.18" font-family="Liberation Sans" font-size="16.2" font-weight="bold" fill="#000" text-anchor="start" xml:space="preserve" textLength="46.22" lengthAdjust="spacingAndGlyphs" stroke="#000" stroke-width="0.3">1,000</text>
<text x="59.93" y="526.65" font-family="Liberation Sans" font-size="16.2" font-weight="bold" fill="#000" text-anchor="start" xml:space="preserve" textLength="10.27" lengthAdjust="spacingAndGlyphs" stroke="#000" stroke-width="0.3">6</text>
<text x="107.67" y="526.65" font-family="Liberation Sans" font-size="16.2" font-weight="bold" fill="#000" text-anchor="start" xml:space="preserve" textLength="61.63" lengthAdjust="spacingAndGlyphs" stroke="#000" stroke-width="0.3">225707</text>
<text x="286.96" y="526.65" font-family="Liberation Sans" font-size="16.2" font-weight="bold" fill="#000" text-anchor="start" xml:space="preserve" textLength="50.34" lengthAdjust="spacingAndGlyphs" stroke="#000" stroke-width="0.3">91187</text>
<text x="497.00" y="526.65" font-family="Liberation Sans" font-size="16.2" font-weight="bold" fill="#000" text-anchor="start" xml:space="preserve" textLength="293.10" lengthAdjust="spacingAndGlyphs" stroke="#000" stroke-width="0.3">Аспирин кардио табл. 300мг №28</text>
<text x="933.30" y="526.65" font-family="Liberation Sans" font-size="16.2" font-weight="bold" fill="#000" text-anchor="start" xml:space="preserve" textLength="210.00" lengthAdjust="spacingAndGlyphs" stroke="#000" stroke-width="0.3">Bayer [Великобритания]</text>
<text x="1287.98" y="526.65" font-family="Liberation Sans" font-size="16.2" font-weight="bold" fill="#000" text-anchor="start" xml:space="preserve" textLength="46.22" lengthAdjust="spacingAndGlyphs" stroke="#000" stroke-width="0.3">1,000</text>
<text x="59.93" y="555.12" font-family="Liberation Sans" font-size="16.2" font-weight="bold" fill="#000" text-anchor="start" xml:space="preserve" textLength="10.27" lengthAdjust="spacingAndGlyphs" stroke="#000" stroke-width="0.3">7</text>
<text x="107.67" y="555.12" font-family="Liberation Sans" font-size="16.2" font-weight="bold" fill="#000" text-anchor="start" xml:space="preserve" textLength="61.63" lengthAdjust="spacingAndGlyphs" stroke="#000" stroke-width="0.3">225721</text>
<text x="296.21" y="555.12" font-family="Liberation Sans" font-size="16.2" font-weight="bold" fill="#000" text-anchor="start" xml:space="preserve" textLength="41.09" lengthAdjust="spacingAndGlyphs" stroke="#000" stroke-width="0.3">2663</text>
<text x="345.20" y="555.12" font-family="Liberation Sans" font-size="16.2" font-weight="bold" fill="#000" text-anchor="start" xml:space="preserve" textLength="103.30" lengthAdjust="spacingAndGlyphs" stroke="#000" stroke-width="0.3">Вітчизняний</text>
<text x="497.00" y="555.12" font-family="Liberation Sans" font-size="16.2" font-weight="bold" fill="#000" text-anchor="start" xml:space="preserve" textLength="369.80" lengthAdjust="spacingAndGlyphs" stroke="#000" stroke-width="0.3">Ацетилсалициловая к-та табл. 0,5г №10 *</text>
<text x="933.30" y="555.12" font-family="Liberation Sans" font-size="16.2" font-weight="bold" fill="#000" text-anchor="start" xml:space="preserve" textLength="208.70" lengthAdjust="spacingAndGlyphs" stroke="#000" stroke-width="0.3">Дарница ЗАО [Украина]</text>
<text x="1287.98" y="555.12" font-family="Liberation Sans" font-size="16.2" font-weight="bold" fill="#000" text-anchor="start" xml:space="preserve" textLength="46.22" lengthAdjust="spacingAndGlyphs" stroke="#000" stroke-width="0.3">1,000</text>
<text x="59.93" y="583.59" font-family="Liberation Sans" font-size="16.2" font-weight="bold" fill="#000" text-anchor="start" xml:space="preserve" textLength="10.27" lengthAdjust="spacingAndGlyphs" stroke="#000" stroke-width="0.3">8</text>
<text x="107.67" y="583.59" font-family="Liberation Sans" font-size="16.2" font-weight="bold" fill="#000" text-anchor="start" xml:space="preserve" textLength="61.63" lengthAdjust="spacingAndGlyphs" stroke="#000" stroke-width="0.3">225697</text>
<text x="296.21" y="583.59" font-family="Liberation Sans" font-size="16.2" font-weight="bold" fill="#000" text-anchor="start" xml:space="preserve" textLength="41.09" lengthAdjust="spacingAndGlyphs" stroke="#000" stroke-width="0.3">7782</text>
<text x="345.20" y="583.59" font-family="Liberation Sans" font-size="16.2" font-weight="bold" fill="#000" text-anchor="start" xml:space="preserve" textLength="103.30" lengthAdjust="spacingAndGlyphs" stroke="#000" stroke-width="0.3">Вітчизняний</text>
<text x="497.00" y="583.59" font-family="Liberation Sans" font-size="16.2" font-weight="bold" fill="#000" text-anchor="start" xml:space="preserve" textLength="145.60" lengthAdjust="spacingAndGlyphs" stroke="#000" stroke-width="0.3">Димексид 100мл</text>
<text x="933.30" y="583.59" font-family="Liberation Sans" font-size="16.2" font-weight="bold" fill="#000" text-anchor="start" xml:space="preserve" textLength="236.90" lengthAdjust="spacingAndGlyphs" stroke="#000" stroke-width="0.3">Лубныфарм ОАО [Украина]</text>
<text x="1287.98" y="583.59" font-family="Liberation Sans" font-size="16.2" font-weight="bold" fill="#000" text-anchor="start" xml:space="preserve" textLength="46.22" lengthAdjust="spacingAndGlyphs" stroke="#000" stroke-width="0.3">1,000</text>
<text x="59.93" y="612.06" font-family="Liberation Sans" font-size="16.2" font-weight="bold" fill="#000" text-anchor="start" xml:space="preserve" textLength="10.27" lengthAdjust="spacingAndGlyphs" stroke="#000" stroke-width="0.3">9</text>
<text x="107.67" y="612.06" font-family="Liberation Sans" font-size="16.2" font-weight="bold" fill="#000" text-anchor="start" xml:space="preserve" textLength="61.63" lengthAdjust="spacingAndGlyphs" stroke="#000" stroke-width="0.3">225706</text>
<text x="285.94" y="612.06" font-family="Liberation Sans" font-size="16.2" font-weight="bold" fill="#000" text-anchor="start" xml:space="preserve" textLength="51.36" lengthAdjust="spacingAndGlyphs" stroke="#000" stroke-width="0.3">66223</text>
<text x="497.00" y="612.06" font-family="Liberation Sans" font-size="16.2" font-weight="bold" fill="#000" text-anchor="start" xml:space="preserve" textLength="324.00" lengthAdjust="spacingAndGlyphs" stroke="#000" stroke-width="0.3">Доппельгерц Энерготоник-Н 1000мл</text>
<text x="933.30" y="612.06" font-family="Liberation Sans" font-size="16.2" font-weight="bold" fill="#000" text-anchor="start" xml:space="preserve" textLength="244.70" lengthAdjust="spacingAndGlyphs" stroke="#000" stroke-width="0.3">Queisser Pharma [Германия]</text>
<text x="1287.98" y="612.06" font-family="Liberation Sans" font-size="16.2" font-weight="bold" fill="#000" text-anchor="start" xml:space="preserve" textLength="46.22" lengthAdjust="spacingAndGlyphs" stroke="#000" stroke-width="0.3">1,000</text>
<text x="49.66" y="640.53" font-family="Liberation Sans" font-size="16.2" font-weight="bold" fill="#000" text-anchor="start" xml:space="preserve" textLength="20.54" lengthAdjust="spacingAndGlyphs" stroke="#000" stroke-width="0.3">10</text>
<text x="107.67" y="640.53" font-family="Liberation Sans" font-size="16.2" font-weight="bold" fill="#000" text-anchor="start" xml:space="preserve" textLength="61.63" lengthAdjust="spacingAndGlyphs" stroke="#000" stroke-width="0.3">225702</text>
<text x="286.96" y="640.53" font-family="Liberation Sans" font-size="16.2" font-weight="bold" fill="#000" text-anchor="start" xml:space="preserve" textLength="50.34" lengthAdjust="spacingAndGlyphs" stroke="#000" stroke-width="0.3">75311</text>
<text x="497.00" y="640.53" font-family="Liberation Sans" font-size="16.2" font-weight="bold" fill="#000" text-anchor="start" xml:space="preserve" textLength="151.60" lengthAdjust="spacingAndGlyphs" stroke="#000" stroke-width="0.3">Идеал капс. №60</text>
<text x="933.30" y="640.53" font-family="Liberation Sans" font-size="16.2" font-weight="bold" fill="#000" text-anchor="start" xml:space="preserve" textLength="210.80" lengthAdjust="spacingAndGlyphs" stroke="#000" stroke-width="0.3">Индонезия [Индонезия]</text>
<text x="1287.98" y="640.53" font-family="Liberation Sans" font-size="16.2" font-weight="bold" fill="#000" text-anchor="start" xml:space="preserve" textLength="46.22" lengthAdjust="spacingAndGlyphs" stroke="#000" stroke-width="0.3">1,000</text>
<text x="50.68" y="669.00" font-family="Liberation Sans" font-size="16.2" font-weight="bold" fill="#000" text-anchor="start" xml:space="preserve" textLength="19.52" lengthAdjust="spacingAndGlyphs" stroke="#000" stroke-width="0.3">11</text>
<text x="107.67" y="669.00" font-family="Liberation Sans" font-size="16.2" font-weight="bold" fill="#000" text-anchor="start" xml:space="preserve" textLength="61.63" lengthAdjust="spacingAndGlyphs" stroke="#000" stroke-width="0.3">225719</text>
<text x="296.21" y="669.00" font-family="Liberation Sans" font-size="16.2" font-weight="bold" fill="#000" text-anchor="start" xml:space="preserve" textLength="41.09" lengthAdjust="spacingAndGlyphs" stroke="#000" stroke-width="0.3">9196</text>
<text x="497.00" y="669.00" font-family="Liberation Sans" font-size="16.2" font-weight="bold" fill="#000" text-anchor="start" xml:space="preserve" textLength="224.80" lengthAdjust="spacingAndGlyphs" stroke="#000" stroke-width="0.3">Имодиум капс. 2мг №20 *</text>
<text x="933.30" y="669.00" font-family="Liberation Sans" font-size="16.2" font-weight="bold" fill="#000" text-anchor="start" xml:space="preserve" textLength="157.90" lengthAdjust="spacingAndGlyphs" stroke="#000" stroke-width="0.3">Janssen [Бельгия]</text>
<text x="1287.98" y="669.00" font-family="Liberation Sans" font-size="16.2" font-weight="bold" fill="#000" text-anchor="start" xml:space="preserve" textLength="46.22" lengthAdjust="spacingAndGlyphs" stroke="#000" stroke-width="0.3">3,000</text>
<text x="49.66" y="697.47" font-family="Liberation Sans" font-size="16.2" font-weight="bold" fill="#000" text-anchor="start" xml:space="preserve" textLength="20.54" lengthAdjust="spacingAndGlyphs" stroke="#000" stroke-width="0.3">12</text>
<text x="107.67" y="697.47" font-family="Liberation Sans" font-size="16.2" font-weight="bold" fill="#000" text-anchor="start" xml:space="preserve" textLength="61.63" lengthAdjust="spacingAndGlyphs" stroke="#000" stroke-width="0.3">225714</text>
<text x="276.69" y="697.47" font-family="Liberation Sans" font-size="16.2" font-weight="bold" fill="#000" text-anchor="start" xml:space="preserve" textLength="60.61" lengthAdjust="spacingAndGlyphs" stroke="#000" stroke-width="0.3">117399</text>
<text x="497.00" y="697.47" font-family="Liberation Sans" font-size="16.2" font-weight="bold" fill="#000" text-anchor="start" xml:space="preserve" textLength="196.60" lengthAdjust="spacingAndGlyphs" stroke="#000" stroke-width="0.3">Инсти гран. пакет № 5</text>
<text x="933.30" y="697.47" font-family="Liberation Sans" font-size="16.2" font-weight="bold" fill="#000" text-anchor="start" xml:space="preserve" textLength="244.70" lengthAdjust="spacingAndGlyphs" stroke="#000" stroke-width="0.3">Herbion Pakistan [Пакистан]</text>
<text x="1287.98" y="697.47" font-family="Liberation Sans" font-size="16.2" font-weight="bold" fill="#000" text-anchor="start" xml:space="preserve" textLength="46.22" lengthAdjust="spacingAndGlyphs" stroke="#000" stroke-width="0.3">0,800</text>
<text x="49.66" y="725.94" font-family="Liberation Sans" font-size="16.2" font-weight="bold" fill="#000" text-anchor="start" xml:space="preserve" textLength="20.54" lengthAdjust="spacingAndGlyphs" stroke="#000" stroke-width="0.3">13</text>
<text x="107.67" y="725.94" font-family="Liberation Sans" font-size="16.2" font-weight="bold" fill="#000" text-anchor="start" xml:space="preserve" textLength="61.63" lengthAdjust="spacingAndGlyphs" stroke="#000" stroke-width="0.3">225712</text>
<text x="276.69" y="725.94" font-family="Liberation Sans" font-size="16.2" font-weight="bold" fill="#000" text-anchor="start" xml:space="preserve" textLength="60.61" lengthAdjust="spacingAndGlyphs" stroke="#000" stroke-width="0.3">119023</text>
<text x="497.00" y="725.94" font-family="Liberation Sans" font-size="16.2" font-weight="bold" fill="#000" text-anchor="start" xml:space="preserve" textLength="290.40" lengthAdjust="spacingAndGlyphs" stroke="#000" stroke-width="0.3">Карвелис пастилки блистер № 20</text>
<text x="933.30" y="725.94" font-family="Liberation Sans" font-size="16.2" font-weight="bold" fill="#000" text-anchor="start" xml:space="preserve" textLength="316.60" lengthAdjust="spacingAndGlyphs" stroke="#000" stroke-width="0.3">Cordus GmbH- Dusseldorf [Германия]</text>
<text x="1287.98" y="725.94" font-family="Liberation Sans" font-size="16.2" font-weight="bold" fill="#000" text-anchor="start" xml:space="preserve" textLength="46.22" lengthAdjust="spacingAndGlyphs" stroke="#000" stroke-width="0.3">1,000</text>
<text x="49.66" y="754.41" font-family="Liberation Sans" font-size="16.2" font-weight="bold" fill="#000" text-anchor="start" xml:space="preserve" textLength="20.54" lengthAdjust="spacingAndGlyphs" stroke="#000" stroke-width="0.3">14</text>
<text x="107.67" y="754.41" font-family="Liberation Sans" font-size="16.2" font-weight="bold" fill="#000" text-anchor="start" xml:space="preserve" textLength="61.63" lengthAdjust="spacingAndGlyphs" stroke="#000" stroke-width="0.3">225722</text>
<text x="275.67" y="754.41" font-family="Liberation Sans" font-size="16.2" font-weight="bold" fill="#000" text-anchor="start" xml:space="preserve" textLength="61.63" lengthAdjust="spacingAndGlyphs" stroke="#000" stroke-width="0.3">125130</text>
<text x="497.00" y="754.41" font-family="Liberation Sans" font-size="16.2" font-weight="bold" fill="#000" text-anchor="start" xml:space="preserve" textLength="384.60" lengthAdjust="spacingAndGlyphs" stroke="#000" stroke-width="0.3">Лазикс Нео р-р д/ин. 10мг/мл амп. 2мл №10</text>
<text x="933.30" y="754.41" font-family="Liberation Sans" font-size="16.2" font-weight="bold" fill="#000" text-anchor="start" xml:space="preserve" textLength="167.80" lengthAdjust="spacingAndGlyphs" stroke="#000" stroke-width="0.3">Зентива [Румыния]</text>
<text x="1287.98" y="754.41" font-family="Liberation Sans" font-size="16.2" font-weight="bold" fill="#000" text-anchor="start" xml:space="preserve" textLength="46.22" lengthAdjust="spacingAndGlyphs" stroke="#000" stroke-width="0.3">1,000</text>
<text x="49.66" y="782.88" font-family="Liberation Sans" font-size="16.2" font-weight="bold" fill="#000" text-anchor="start" xml:space="preserve" textLength="20.54" lengthAdjust="spacingAndGlyphs" stroke="#000" stroke-width="0.3">15</text>
<text x="107.67" y="782.88" font-family="Liberation Sans" font-size="16.2" font-weight="bold" fill="#000" text-anchor="start" xml:space="preserve" textLength="61.63" lengthAdjust="spacingAndGlyphs" stroke="#000" stroke-width="0.3">225708</text>
<text x="285.94" y="782.88" font-family="Liberation Sans" font-size="16.2" font-weight="bold" fill="#000" text-anchor="start" xml:space="preserve" textLength="51.36" lengthAdjust="spacingAndGlyphs" stroke="#000" stroke-width="0.3">82758</text>
<text x="497.00" y="782.88" font-family="Liberation Sans" font-size="16.2" font-weight="bold" fill="#000" text-anchor="start" xml:space="preserve" textLength="202.60" lengthAdjust="spacingAndGlyphs" stroke="#000" stroke-width="0.3">Лазикс табл. 40мг №45</text>
<text x="933.30" y="782.88" font-family="Liberation Sans" font-size="16.2" font-weight="bold" fill="#000" text-anchor="start" xml:space="preserve" textLength="295.50" lengthAdjust="spacingAndGlyphs" stroke="#000" stroke-width="0.3">Aventis Pharma [Великобритания]</text>
<text x="1287.98" y="782.88" font-family="Liberation Sans" font-size="16.2" font-weight="bold" fill="#000" text-anchor="start" xml:space="preserve" textLength="46.22" lengthAdjust="spacingAndGlyphs" stroke="#000" stroke-width="0.3">0,220</text>
<text x="49.66" y="811.35" font-family="Liberation Sans" font-size="16.2" font-weight="bold" fill="#000" text-anchor="start" xml:space="preserve" textLength="20.54" lengthAdjust="spacingAndGlyphs" stroke="#000" stroke-width="0.3">16</text>
<text x="107.67" y="811.35" font-family="Liberation Sans" font-size="16.2" font-weight="bold" fill="#000" text-anchor="start" xml:space="preserve" textLength="61.63" lengthAdjust="spacingAndGlyphs" stroke="#000" stroke-width="0.3">225696</text>
<text x="285.94" y="811.35" font-family="Liberation Sans" font-size="16.2" font-weight="bold" fill="#000" text-anchor="start" xml:space="preserve" textLength="51.36" lengthAdjust="spacingAndGlyphs" stroke="#000" stroke-width="0.3">97510</text>
<text x="345.20" y="811.35" font-family="Liberation Sans" font-size="16.2" font-weight="bold" fill="#000" text-anchor="start" xml:space="preserve" textLength="103.30" lengthAdjust="spacingAndGlyphs" stroke="#000" stroke-width="0.3">Вітчизняний</text>
<text x="497.00" y="811.35" font-family="Liberation Sans" font-size="16.2" font-weight="bold" fill="#000" text-anchor="start" xml:space="preserve" textLength="369.40" lengthAdjust="spacingAndGlyphs" stroke="#000" stroke-width="0.3">Натрия хлорид 0,9% р-р 2мл №10 небулы</text>
<text x="933.30" y="811.35" font-family="Liberation Sans" font-size="16.2" font-weight="bold" fill="#000" text-anchor="start" xml:space="preserve" textLength="234.10" lengthAdjust="spacingAndGlyphs" stroke="#000" stroke-width="0.3">Юрия-Фарм ООО [Украина]</text>
<text x="1287.98" y="811.35" font-family="Liberation Sans" font-size="16.2" font-weight="bold" fill="#000" text-anchor="start" xml:space="preserve" textLength="46.22" lengthAdjust="spacingAndGlyphs" stroke="#000" stroke-width="0.3">1,000</text>
<text x="1343.30" y="811.35" font-family="Liberation Sans" font-size="16.2" font-weight="bold" fill="#000" text-anchor="start" xml:space="preserve" textLength="100.80" lengthAdjust="spacingAndGlyphs" stroke="#000" stroke-width="0.3">Медицинс...</text>
<text x="49.66" y="839.82" font-family="Liberation Sans" font-size="16.2" font-weight="bold" fill="#000" text-anchor="start" xml:space="preserve" textLength="20.54" lengthAdjust="spacingAndGlyphs" stroke="#000" stroke-width="0.3">17</text>
<text x="107.67" y="839.82" font-family="Liberation Sans" font-size="16.2" font-weight="bold" fill="#000" text-anchor="start" xml:space="preserve" textLength="61.63" lengthAdjust="spacingAndGlyphs" stroke="#000" stroke-width="0.3">225693</text>
<text x="275.67" y="839.82" font-family="Liberation Sans" font-size="16.2" font-weight="bold" fill="#000" text-anchor="start" xml:space="preserve" textLength="61.63" lengthAdjust="spacingAndGlyphs" stroke="#000" stroke-width="0.3">125049</text>
<text x="497.00" y="839.82" font-family="Liberation Sans" font-size="16.2" font-weight="bold" fill="#000" text-anchor="start" xml:space="preserve" textLength="184.60" lengthAdjust="spacingAndGlyphs" stroke="#000" stroke-width="0.3">Омез капс. 20мг №30</text>
<text x="933.30" y="839.82" font-family="Liberation Sans" font-size="16.2" font-weight="bold" fill="#000" text-anchor="start" xml:space="preserve" textLength="169.50" lengthAdjust="spacingAndGlyphs" stroke="#000" stroke-width="0.3">Dr. Reddy&#x27;s [Индия]</text>
<text x="1287.98" y="839.82" font-family="Liberation Sans" font-size="16.2" font-weight="bold" fill="#000" text-anchor="start" xml:space="preserve" textLength="46.22" lengthAdjust="spacingAndGlyphs" stroke="#000" stroke-width="0.3">0,333</text>
<text x="49.66" y="868.29" font-family="Liberation Sans" font-size="16.2" font-weight="bold" fill="#000" text-anchor="start" xml:space="preserve" textLength="20.54" lengthAdjust="spacingAndGlyphs" stroke="#000" stroke-width="0.3">18</text>
<text x="107.67" y="868.29" font-family="Liberation Sans" font-size="16.2" font-weight="bold" fill="#000" text-anchor="start" xml:space="preserve" textLength="61.63" lengthAdjust="spacingAndGlyphs" stroke="#000" stroke-width="0.3">225703</text>
<text x="275.67" y="868.29" font-family="Liberation Sans" font-size="16.2" font-weight="bold" fill="#000" text-anchor="start" xml:space="preserve" textLength="61.63" lengthAdjust="spacingAndGlyphs" stroke="#000" stroke-width="0.3">105703</text>
<text x="345.20" y="868.29" font-family="Liberation Sans" font-size="16.2" font-weight="bold" fill="#000" text-anchor="start" xml:space="preserve" textLength="103.30" lengthAdjust="spacingAndGlyphs" stroke="#000" stroke-width="0.3">Вітчизняний</text>
<text x="497.00" y="868.29" font-family="Liberation Sans" font-size="16.2" font-weight="bold" fill="#000" text-anchor="start" xml:space="preserve" textLength="249.10" lengthAdjust="spacingAndGlyphs" stroke="#000" stroke-width="0.3">Ототон кап. уш. фл. 16 г № 1</text>
<text x="933.30" y="868.29" font-family="Liberation Sans" font-size="16.2" font-weight="bold" fill="#000" text-anchor="start" xml:space="preserve" textLength="158.90" lengthAdjust="spacingAndGlyphs" stroke="#000" stroke-width="0.3">Фармак [Украина]</text>
<text x="1287.98" y="868.29" font-family="Liberation Sans" font-size="16.2" font-weight="bold" fill="#000" text-anchor="start" xml:space="preserve" textLength="46.22" lengthAdjust="spacingAndGlyphs" stroke="#000" stroke-width="0.3">2,000</text>
<text x="49.66" y="896.76" font-family="Liberation Sans" font-size="16.2" font-weight="bold" fill="#000" text-anchor="start" xml:space="preserve" textLength="20.54" lengthAdjust="spacingAndGlyphs" stroke="#000" stroke-width="0.3">19</text>
<text x="107.67" y="896.76" font-family="Liberation Sans" font-size="16.2" font-weight="bold" fill="#000" text-anchor="start" xml:space="preserve" textLength="61.63" lengthAdjust="spacingAndGlyphs" stroke="#000" stroke-width="0.3">225704</text>
<text x="285.94" y="896.76" font-family="Liberation Sans" font-size="16.2" font-weight="bold" fill="#000" text-anchor="start" xml:space="preserve" textLength="51.36" lengthAdjust="spacingAndGlyphs" stroke="#000" stroke-width="0.3">74393</text>
<text x="345.20" y="896.76" font-family="Liberation Sans" font-size="16.2" font-weight="bold" fill="#000" text-anchor="start" xml:space="preserve" textLength="103.30" lengthAdjust="spacingAndGlyphs" stroke="#000" stroke-width="0.3">Вітчизняний</text>
<text x="497.00" y="896.76" font-family="Liberation Sans" font-size="16.2" font-weight="bold" fill="#000" text-anchor="start" xml:space="preserve" textLength="425.90" lengthAdjust="spacingAndGlyphs" stroke="#000" stroke-width="0.3">Парацетамол беби сусп. орал. 2,4% саше 10 мл...</text>
<text x="933.30" y="896.76" font-family="Liberation Sans" font-size="16.2" font-weight="bold" fill="#000" text-anchor="start" xml:space="preserve" textLength="179.00" lengthAdjust="spacingAndGlyphs" stroke="#000" stroke-width="0.3">Здоровье [Украина]</text>
<text x="1287.98" y="896.76" font-family="Liberation Sans" font-size="16.2" font-weight="bold" fill="#000" text-anchor="start" xml:space="preserve" textLength="46.22" lengthAdjust="spacingAndGlyphs" stroke="#000" stroke-width="0.3">1,000</text>
<text x="49.66" y="925.23" font-family="Liberation Sans" font-size="16.2" font-weight="bold" fill="#000" text-anchor="start" xml:space="preserve" textLength="20.54" lengthAdjust="spacingAndGlyphs" stroke="#000" stroke-width="0.3">20</text>
<text x="107.67" y="925.23" font-family="Liberation Sans" font-size="16.2" font-weight="bold" fill="#000" text-anchor="start" xml:space="preserve" textLength="61.63" lengthAdjust="spacingAndGlyphs" stroke="#000" stroke-width="0.3">225700</text>
<text x="276.69" y="925.23" font-family="Liberation Sans" font-size="16.2" font-weight="bold" fill="#000" text-anchor="start" xml:space="preserve" textLength="60.61" lengthAdjust="spacingAndGlyphs" stroke="#000" stroke-width="0.3">125110</text>
<text x="345.20" y="925.23" font-family="Liberation Sans" font-size="16.2" font-weight="bold" fill="#000" text-anchor="start" xml:space="preserve" textLength="103.30" lengthAdjust="spacingAndGlyphs" stroke="#000" stroke-width="0.3">Вітчизняний</text>
<text x="497.00" y="925.23" font-family="Liberation Sans" font-size="16.2" font-weight="bold" fill="#000" text-anchor="start" xml:space="preserve" textLength="280.00" lengthAdjust="spacingAndGlyphs" stroke="#000" stroke-width="0.3">Парацетамол супп. 500мг №10</text>
<text x="933.30" y="925.23" font-family="Liberation Sans" font-size="16.2" font-weight="bold" fill="#000" text-anchor="start" xml:space="preserve" textLength="244.70" lengthAdjust="spacingAndGlyphs" stroke="#000" stroke-width="0.3">Здоровье ООО ФК [Украина]</text>
<text x="1287.98" y="925.23" font-family="Liberation Sans" font-size="16.2" font-weight="bold" fill="#000" text-anchor="start" xml:space="preserve" textLength="46.22" lengthAdjust="spacingAndGlyphs" stroke="#000" stroke-width="0.3">1,000</text>
</g>
<text x="1588.00" y="437.54" font-family="Liberation Serif" font-size="17.2" font-weight="bold" fill="#ffffff" text-anchor="start" xml:space="preserve" textLength="20.00" lengthAdjust="spacingAndGlyphs">10</text>
<text x="1588.00" y="494.48" font-family="Liberation Serif" font-size="17.2" font-weight="bold" fill="#ffffff" text-anchor="start" xml:space="preserve" textLength="20.00" lengthAdjust="spacingAndGlyphs">10</text>
<text x="1588.00" y="551.42" font-family="Liberation Serif" font-size="17.2" font-weight="bold" fill="#ffffff" text-anchor="start" xml:space="preserve" textLength="20.00" lengthAdjust="spacingAndGlyphs">10</text>
<path d="M6,372.5 L13.5,378.5 L6,384.5" fill="none" stroke="#222" stroke-width="1.6"/>
<path d="M6.2,375.5 L9.8,378.5 L6.2,381.5 Z" fill="#222"/>
<rect x="4.20" y="343.50" width="1.60" height="1.60" fill="#333"/>
<rect x="7.30" y="343.50" width="6.30" height="1.60" fill="#333"/>
<rect x="4.20" y="347.00" width="1.60" height="1.60" fill="#333"/>
<rect x="7.30" y="347.00" width="6.30" height="1.60" fill="#333"/>
<rect x="4.20" y="350.50" width="1.60" height="1.60" fill="#333"/>
<rect x="7.30" y="350.50" width="6.30" height="1.60" fill="#333"/>
<rect x="4.20" y="354.00" width="1.60" height="1.60" fill="#333"/>
<rect x="7.30" y="354.00" width="6.30" height="1.60" fill="#333"/>
<text x="22.00" y="356.60" font-family="Liberation Sans" font-size="16.6" fill="#1e1e2e" text-anchor="start" xml:space="preserve" textLength="48.50" lengthAdjust="spacingAndGlyphs">№ п/п</text>
<text x="115.20" y="356.60" font-family="Liberation Sans" font-size="16.6" fill="#1e1e2e" text-anchor="start" xml:space="preserve" textLength="17.00" lengthAdjust="spacingAndGlyphs">ІД</text>
<text x="178.00" y="356.60" font-family="Liberation Sans" font-size="16.6" fill="#1e1e2e" text-anchor="start" xml:space="preserve" textLength="72.90" lengthAdjust="spacingAndGlyphs">Контроль</text>
<text x="260.30" y="356.60" font-family="Liberation Sans" font-size="16.6" fill="#1e1e2e" text-anchor="start" xml:space="preserve" textLength="75.70" lengthAdjust="spacingAndGlyphs">ІД товару</text>
<text x="359.40" y="356.60" font-family="Liberation Sans" font-size="16.6" fill="#1e1e2e" text-anchor="start" xml:space="preserve" textLength="113.00" lengthAdjust="spacingAndGlyphs">Приналежність</text>
<text x="659.00" y="356.60" font-family="Liberation Sans" font-size="16.6" fill="#1e1e2e" text-anchor="start" xml:space="preserve" textLength="104.00" lengthAdjust="spacingAndGlyphs">Назва товару</text>
<text x="1058.50" y="356.60" font-family="Liberation Sans" font-size="16.6" fill="#1e1e2e" text-anchor="start" xml:space="preserve" textLength="71.20" lengthAdjust="spacingAndGlyphs">Виробник</text>
<text x="1264.00" y="356.60" font-family="Liberation Sans" font-size="16.6" fill="#1e1e2e" text-anchor="start" xml:space="preserve" textLength="67.20" lengthAdjust="spacingAndGlyphs">Кількість</text>
<text x="1343.30" y="356.60" font-family="Liberation Sans" font-size="16.6" fill="#1e1e2e" text-anchor="start" xml:space="preserve" textLength="106.10" lengthAdjust="spacingAndGlyphs">Постачальник</text>
<text x="1459.20" y="356.60" font-family="Liberation Sans" font-size="16.6" fill="#1e1e2e" text-anchor="start" xml:space="preserve" textLength="274.60" lengthAdjust="spacingAndGlyphs">Рекомендована кількість в упаковці</text>
<text x="1743.60" y="356.60" font-family="Liberation Sans" font-size="16.6" fill="#1e1e2e" text-anchor="start" xml:space="preserve" textLength="127.50" lengthAdjust="spacingAndGlyphs">Поточні залишки</text>
<text x="1880.30" y="356.60" font-family="Liberation Sans" font-size="16.6" fill="#1e1e2e" text-anchor="start" xml:space="preserve" textLength="135.40" lengthAdjust="spacingAndGlyphs">Закупівельна ціна</text>
<path d="M2028.8,354 L2033.3,345.5 L2037.8,354 Z" fill="none" stroke="#8a8a8a" stroke-width="1"/>
<clipPath id="hclip"><rect x="2049" y="336" width="86" height="28"/></clipPath>
<g clip-path="url(#hclip)">
<text x="2052.90" y="356.60" font-family="Liberation Sans" font-size="16.6" fill="#1e1e2e" text-anchor="start" xml:space="preserve" textLength="135.00" lengthAdjust="spacingAndGlyphs">Закупівельна сума</text>
</g>
<line x1="0.00" y1="917.50" x2="2135.00" y2="917.50" stroke="#8e8e8e" stroke-width="2"/>
<rect x="0.00" y="918.50" width="2135.00" height="32.80" fill="#efefef"/>
<line x1="17.30" y1="917.50" x2="17.30" y2="951.30" stroke="#a2a2a2" stroke-width="1.5"/>
<line x1="0.00" y1="951.30" x2="2135.00" y2="951.30" stroke="#a8a8a8" stroke-width="1.3"/>
<rect x="495.00" y="921.70" width="433.30" height="26.60" fill="#e4e6e8"/>
<text x="498.30" y="941.70" font-family="Liberation Sans" font-size="16.2" font-weight="bold" fill="#111" text-anchor="start" xml:space="preserve" textLength="108.40" lengthAdjust="spacingAndGlyphs">Запис 1 із 33</text>
<rect x="1261.70" y="921.70" width="75.00" height="26.60" fill="#e4e6e8"/>
<text x="1286.70" y="941.70" font-family="Liberation Sans" font-size="16.2" font-weight="bold" fill="#111" text-anchor="start" xml:space="preserve" textLength="46.60" lengthAdjust="spacingAndGlyphs">43,82</text>
<rect x="2135.00" y="282.00" width="24.00" height="670.00" fill="#f0f0f0"/>
<line x1="2135.40" y1="282.00" x2="2135.40" y2="307.00" stroke="#fafafa" stroke-width="1.5"/>
<rect x="2136.20" y="307.00" width="21.80" height="356.50" fill="#cdcdcd"/>
<path d="M2142.5,299.3 L2147.3,291.5 L2152.1,299.3" fill="none" stroke="#5e5e5e" stroke-width="2.8"/>
<path d="M2142.5,935.5 L2147.3,943.3 L2152.1,935.5" fill="none" stroke="#5e5e5e" stroke-width="2.8"/>
<rect x="0.00" y="953.50" width="2135.00" height="24.00" fill="#f0f0f0"/>
<rect x="25.40" y="954.30" width="731.60" height="21.40" fill="#cdcdcd"/>
<path d="M16.3,960.2 L8.3,965.1 L16.3,970.1" fill="none" stroke="#5a5a5a" stroke-width="2.8"/>
<path d="M2118.2,960.2 L2126.2,965.1 L2118.2,970.1" fill="none" stroke="#5a5a5a" stroke-width="2.8"/>
<rect x="0.00" y="977.00" width="2159.00" height="13.00" fill="#ffffff"/>
<line x1="2157.80" y1="978.00" x2="2157.80" y2="1277.00" stroke="#a0a0a0" stroke-width="1.5"/>
<line x1="2.00" y1="990.50" x2="2158.00" y2="990.50" stroke="#a8a8a8" stroke-width="1.5"/>
<line x1="2.00" y1="990.50" x2="2.00" y2="1277.00" stroke="#d8d8d8" stroke-width="1.2"/>
<line x1="2.00" y1="1277.00" x2="2158.00" y2="1277.00" stroke="#a8a8a8" stroke-width="1.5"/>
<rect x="3.00" y="991.50" width="66.50" height="34.00" fill="#ffffff"/>
<rect x="70.00" y="995.50" width="58.80" height="27.00" fill="#efefef" stroke="#dcdcdc" stroke-width="1"/>
<rect x="129.80" y="995.50" width="257.00" height="27.00" fill="#efefef" stroke="#dcdcdc" stroke-width="1"/>
<rect x="387.80" y="995.50" width="261.70" height="27.00" fill="#efefef" stroke="#dcdcdc" stroke-width="1"/>
<text x="17.30" y="1013.30" font-family="Liberation Sans" font-size="16.9" fill="#1a1a1a" text-anchor="start" xml:space="preserve" textLength="35.40" lengthAdjust="spacingAndGlyphs">Філія</text>
<text x="76.00" y="1014.90" font-family="Liberation Sans" font-size="16.9" fill="#1a1a1a" text-anchor="start" xml:space="preserve" textLength="44.00" lengthAdjust="spacingAndGlyphs">Зайве</text>
<text x="139.30" y="1014.90" font-family="Liberation Sans" font-size="16.9" fill="#1a1a1a" text-anchor="start" xml:space="preserve" textLength="239.00" lengthAdjust="spacingAndGlyphs">Заявка. Залишки по замінникам</text>
<text x="396.70" y="1014.90" font-family="Liberation Sans" font-size="16.9" fill="#1a1a1a" text-anchor="start" xml:space="preserve" textLength="246.60" lengthAdjust="spacingAndGlyphs">Заявка до постачальника Зайве</text>
<rect x="3.00" y="1022.00" width="2152.00" height="254.00" fill="#ffffff"/>
<rect x="3.50" y="1022.00" width="2151.50" height="254.00" fill="none" stroke="#e4e4e4" stroke-width="1"/>
<rect x="9.00" y="1028.80" width="2142.00" height="240.00" fill="#ffffff" stroke="#8b9098" stroke-width="1.8"/>
<line x1="26.30" y1="1029.50" x2="26.30" y2="1056.70" stroke="#e0e0e0" stroke-width="1"/>
<line x1="71.10" y1="1029.50" x2="71.10" y2="1056.70" stroke="#e0e0e0" stroke-width="1"/>
<rect x="13.30" y="1036.50" width="1.50" height="1.50" fill="#333"/>
<rect x="16.30" y="1036.50" width="6.40" height="1.50" fill="#333"/>
<rect x="13.30" y="1040.20" width="1.50" height="1.50" fill="#333"/>
<rect x="16.30" y="1040.20" width="6.40" height="1.50" fill="#333"/>
<rect x="13.30" y="1043.90" width="1.50" height="1.50" fill="#333"/>
<rect x="16.30" y="1043.90" width="6.40" height="1.50" fill="#333"/>
<rect x="13.30" y="1047.60" width="1.50" height="1.50" fill="#333"/>
<rect x="16.30" y="1047.60" width="6.40" height="1.50" fill="#333"/>
<text x="31.10" y="1049.40" font-family="Liberation Sans" font-size="16.9" fill="#1a1a1a" text-anchor="start" xml:space="preserve" textLength="35.30" lengthAdjust="spacingAndGlyphs">Філія</text>
<text x="76.10" y="1049.40" font-family="Liberation Sans" font-size="16.9" fill="#1a1a1a" text-anchor="start" xml:space="preserve" textLength="80.00" lengthAdjust="spacingAndGlyphs">Замовлено</text>
<text x="32.50" y="1139.60" font-family="Liberation Sans" font-size="16.9" font-weight="bold" fill="#7b7b7b" text-anchor="start" xml:space="preserve" textLength="125.00" lengthAdjust="spacingAndGlyphs">&lt;Немає даних</text>
<text x="76.75" y="1159.10" font-family="Liberation Sans" font-size="16.9" font-weight="bold" fill="#7b7b7b" text-anchor="start" xml:space="preserve" textLength="33.50" lengthAdjust="spacingAndGlyphs">для</text>
<text x="30.50" y="1178.50" font-family="Liberation Sans" font-size="16.9" font-weight="bold" fill="#7b7b7b" text-anchor="start" xml:space="preserve" textLength="128.00" lengthAdjust="spacingAndGlyphs">відображення</text>
<text x="88.25" y="1197.50" font-family="Liberation Sans" font-size="16.9" font-weight="bold" fill="#7b7b7b" text-anchor="start" xml:space="preserve" textLength="10.50" lengthAdjust="spacingAndGlyphs">&gt;</text>
<rect x="6.50" y="1281.50" width="18.50" height="18.50" fill="#ffffff" stroke="#333" stroke-width="1.4"/>
<path d="M9.5,1290.5 L14,1295.5 L22,1285" fill="none" stroke="#333" stroke-width="1.6"/>
<text x="28.70" y="1298.30" font-family="Liberation Sans" font-size="16.9" fill="#1a1a1a" text-anchor="start" xml:space="preserve" textLength="144.30" lengthAdjust="spacingAndGlyphs">Показувати деталі</text>
<rect x="5.50" y="1307.40" width="185.30" height="32.40" fill="#f0f0f0" stroke="#1c1c1c" stroke-width="1.8"/>
<rect x="196.30" y="1307.40" width="184.80" height="32.40" fill="#f0f0f0" stroke="#1c1c1c" stroke-width="1.8"/>
<rect x="386.40" y="1307.40" width="185.70" height="32.40" fill="#f0f0f0" stroke="#1c1c1c" stroke-width="1.8"/>
<text x="9.20" y="1329.20" font-family="Liberation Sans" font-size="16.9" fill="#1a1a1a" text-anchor="start" xml:space="preserve" textLength="61.40" lengthAdjust="spacingAndGlyphs">Головна</text>
<text x="198.50" y="1329.20" font-family="Liberation Sans" font-size="16.9" fill="#1a1a1a" text-anchor="start" xml:space="preserve" textLength="180.00" lengthAdjust="spacingAndGlyphs">Список: Заявки пост ...</text>
<text x="389.00" y="1329.20" font-family="Liberation Sans" font-size="16.9" fill="#1a1a1a" text-anchor="start" xml:space="preserve" textLength="180.00" lengthAdjust="spacingAndGlyphs">Список: Заявки пост ...</text>
<rect x="576.90" y="1307.40" width="185.30" height="32.40" fill="#fdd1a4" stroke="#2a8ae0" stroke-width="1.8"/>
<text x="579.50" y="1329.20" font-family="Liberation Sans" font-size="16.9" fill="#1a1a1a" text-anchor="start" xml:space="preserve" textLength="180.50" lengthAdjust="spacingAndGlyphs">Заявка поставщикам  ..</text>
<line x1="0.00" y1="1344.60" x2="2159.00" y2="1344.60" stroke="#d8d8d8" stroke-width="1.2"/>
<line x1="297.40" y1="1347.00" x2="297.40" y2="1370.00" stroke="#d0d0d0" stroke-width="1.2"/>
<line x1="603.50" y1="1347.00" x2="603.50" y2="1370.00" stroke="#d0d0d0" stroke-width="1.2"/>
<line x1="661.60" y1="1347.00" x2="661.60" y2="1370.00" stroke="#d0d0d0" stroke-width="1.2"/>
<line x1="1118.50" y1="1347.00" x2="1118.50" y2="1370.00" stroke="#d0d0d0" stroke-width="1.2"/>
<path d="M5,1352 L8,1350 L22.5,1350 L22.5,1369 L19,1370 L5,1370 Z" fill="#8a90c8"/>
<rect x="5.00" y="1352.00" width="14.50" height="18.00" fill="#7d8ad0"/>
<path d="M19.5,1352 L22.5,1350 L22.5,1369 L19.5,1370 Z" fill="#6a72b0"/>
<path d="M5,1352 L8,1350 L22.5,1350 L19.5,1352 Z" fill="#c0c4e8"/>
<rect x="5.50" y="1355.50" width="14.00" height="1.60" fill="#4fb0f5"/>
<rect x="5.50" y="1359.50" width="14.00" height="1.60" fill="#4fb0f5"/>
<rect x="5.50" y="1363.50" width="14.00" height="1.60" fill="#4fb0f5"/>
<rect x="5.50" y="1367.50" width="14.00" height="1.60" fill="#4fb0f5"/>
<text x="30.60" y="1366.40" font-family="Liberation Sans" font-size="18" fill="#151515" text-anchor="start" xml:space="preserve" textLength="208.40" lengthAdjust="spacingAndGlyphs">База даних: TASA3@TITAN</text>
<circle cx="311.5" cy="1355.5" r="5.2" fill="#e03a28"/>
<circle cx="312" cy="1358.5" r="4.3" fill="#b8c0f0"/>
<circle cx="312" cy="1359" r="2.6" fill="#f2c79a"/>
<path d="M304,1370 Q304,1362.5 312,1362.5 Q320,1362.5 320,1370 Z" fill="#9aa4e8"/>
<text x="328.90" y="1366.40" font-family="Liberation Sans" font-size="18" fill="#151515" text-anchor="start" xml:space="preserve" textLength="130.50" lengthAdjust="spacingAndGlyphs">Користувач: GIFT</text>
<path d="M607,1370 L607,1360 Q609,1352.5 616,1352 Q623,1352.5 626,1360 L626,1370 Z" fill="#8088c8"/>
<path d="M611,1354 Q616,1351 621,1354 L619,1357 L613,1357 Z" fill="#c8cce8"/>
<rect x="609.00" y="1363.00" width="2.60" height="7.00" fill="#e8b830"/>
<rect x="619.50" y="1363.00" width="2.60" height="7.00" fill="#e8b830"/>
<text x="635.00" y="1366.40" font-family="Liberation Sans" font-size="18" fill="#151515" text-anchor="start" xml:space="preserve" textLength="9.50" lengthAdjust="spacingAndGlyphs">3</text>
<text x="666.70" y="1366.40" font-family="Liberation Sans" font-size="18" fill="#151515" text-anchor="start" xml:space="preserve" textLength="251.00" lengthAdjust="spacingAndGlyphs">Кассовый аппарат не подключен</text>
<text x="1123.80" y="1366.40" font-family="Liberation Sans" font-size="18" fill="#151515" text-anchor="start" xml:space="preserve" textLength="114.20" lengthAdjust="spacingAndGlyphs">Зона: Склад [1]</text>
<polygon points="195.55,575.75 196.45,576.85 559.3,284.6 555.7,280.4" fill="#ee0000"/>
<path d="M567.2,270.8 L551.5,274.6 L555.5,281 L560.3,285.6 Z" fill="#ee0000" stroke="#ee0000" stroke-width="2.6" stroke-linejoin="round"/>
</svg>
</body></html>
